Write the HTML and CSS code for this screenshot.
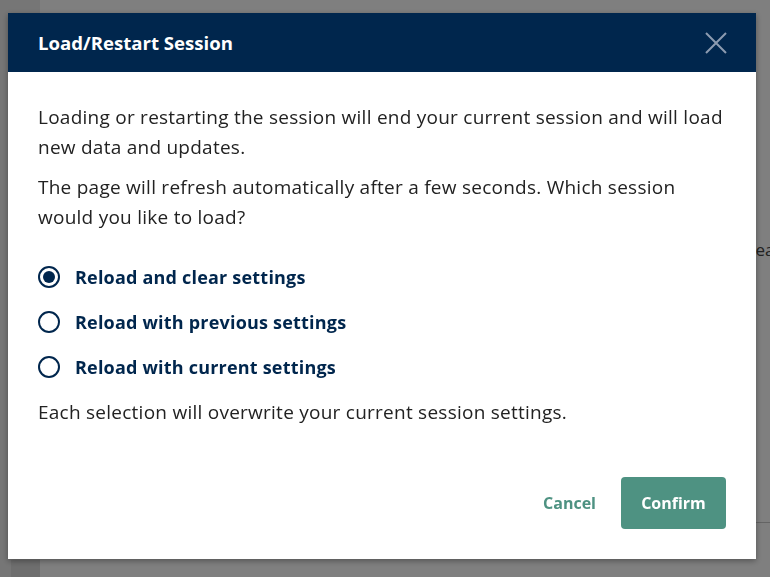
FILE: index.html
```html
<!DOCTYPE html>
<html lang="en">
<head>
    <meta charset="UTF-8">
    <meta name="viewport" content="width=device-width, initial-scale=1.0">
    <title>Load/Restart Session</title>
    <link rel="stylesheet" href="styles.css">
</head>
<body>
    <div class="app">
        <aside class="sidebar">
            <div class="sidebar-foot"></div>
        </aside>
        <main class="main">
            <div class="main-row">
                <span class="main-label">Year</span>
            </div>
            <div class="main-divider"></div>
        </main>
    </div>

    <div class="overlay">
        <div class="modal" role="dialog" aria-labelledby="modal-title">
            <div class="modal-header">
                <h2 id="modal-title">Load/Restart Session</h2>
                <button class="close-button" aria-label="Close">
                    <svg width="22" height="22" viewBox="0 0 22 22">
                        <path d="M1 1 L21 21 M21 1 L1 21" stroke="currentColor" stroke-width="2" fill="none"/>
                    </svg>
                </button>
            </div>
            <div class="modal-body">
                <p>Loading or restarting the session will end your current session and will load new data and updates.</p>
                <p>The page will refresh automatically after a few seconds. Which session would you like to load?</p>
                <div class="radio-group">
                    <label class="radio-option">
                        <input type="radio" name="session" value="clear" checked>
                        <span class="radio-mark"></span>
                        <span class="radio-text">Reload and clear settings</span>
                    </label>
                    <label class="radio-option">
                        <input type="radio" name="session" value="previous">
                        <span class="radio-mark"></span>
                        <span class="radio-text">Reload with previous settings</span>
                    </label>
                    <label class="radio-option">
                        <input type="radio" name="session" value="current">
                        <span class="radio-mark"></span>
                        <span class="radio-text">Reload with current settings</span>
                    </label>
                </div>
                <p class="note">Each selection will overwrite your current session settings.</p>
            </div>
            <div class="modal-footer">
                <button class="btn-link">Cancel</button>
                <button class="btn-primary">Confirm</button>
            </div>
        </div>
    </div>
</body>
</html>
```

FILE: styles.css
```css
body {
    margin: 0;
    font-family: "Open Sans", "Noto Sans", sans-serif;
    background: #fff;
    color: #222;
}

/* page behind the dialog */
.app {
    display: flex;
    height: 577px;
    overflow: hidden;
}

.sidebar {
    flex-shrink: 0;
    width: 40px;
    background: #ececec;
    display: flex;
    flex-direction: column;
    justify-content: flex-end;
}

.sidebar-foot {
    height: 17px;
    margin-left: 11px;
    background: #dcdcdc;
}

.main {
    flex: 1;
    min-width: 0;
    display: flex;
    flex-direction: column;
    padding-top: 238px;
}

.main-row {
    padding-left: 706px;
    font-size: 17px;
    color: #444;
    white-space: nowrap;
}

.main-divider {
    margin-top: 261px;
    border-top: 1px solid #c8c8c8;
}

.overlay {
    position: fixed;
    inset: 0;
    background: rgba(0, 0, 0, 0.5);
}

.modal {
    position: absolute;
    left: 8px;
    top: 13px;
    width: 748px;
    background: #fff;
    box-shadow: 0 2px 6px rgba(0, 0, 0, 0.35);
    display: flex;
    flex-direction: column;
}

.modal-header {
    height: 59px;
    background: #00264d;
    display: flex;
    align-items: center;
    justify-content: space-between;
    padding: 0 29px 0 30px;
}

.modal-header h2 {
    margin: 0;
    color: #fff;
    font-size: 18.6px;
    font-weight: 700;
}

.close-button {
    border: none;
    background: none;
    padding: 0;
    color: #8c9bb0;
    display: flex;
    cursor: pointer;
}

.modal-body {
    padding: 30px 30px 0;
}

.modal-body p {
    margin: 0 0 10px;
    font-size: 19px;
    letter-spacing: 0.25px;
    line-height: 30px;
}

.radio-group {
    display: flex;
    flex-direction: column;
    gap: 15px;
    margin: 30px 0 15px;
}

.radio-option {
    display: flex;
    align-items: center;
    gap: 15px;
    line-height: 30px;
    cursor: pointer;
}

.radio-option input {
    display: none;
}

.radio-mark {
    width: 18px;
    height: 18px;
    border: 2px solid #00264d;
    border-radius: 50%;
    display: flex;
    align-items: center;
    justify-content: center;
}

.radio-option input:checked + .radio-mark::after {
    content: "";
    width: 12px;
    height: 12px;
    border-radius: 50%;
    background: #00264d;
}

.radio-text {
    font-size: 18px;
    letter-spacing: 0.2px;
    font-weight: 700;
    color: #00264d;
}

.modal-body .note {
    margin: 0;
}

.modal-footer {
    display: flex;
    justify-content: flex-end;
    align-items: center;
    gap: 25px;
    padding: 50px 30px 30px;
}

.btn-link {
    border: none;
    background: none;
    font-family: inherit;
    font-size: 16px;
    font-weight: 700;
    color: #4e9282;
    padding: 0;
    cursor: pointer;
}

.btn-primary {
    border: none;
    border-radius: 4px;
    background: #4e9282;
    color: #fff;
    font-family: inherit;
    font-size: 16px;
    font-weight: 700;
    height: 52px;
    width: 105px;
    cursor: pointer;
}
```
